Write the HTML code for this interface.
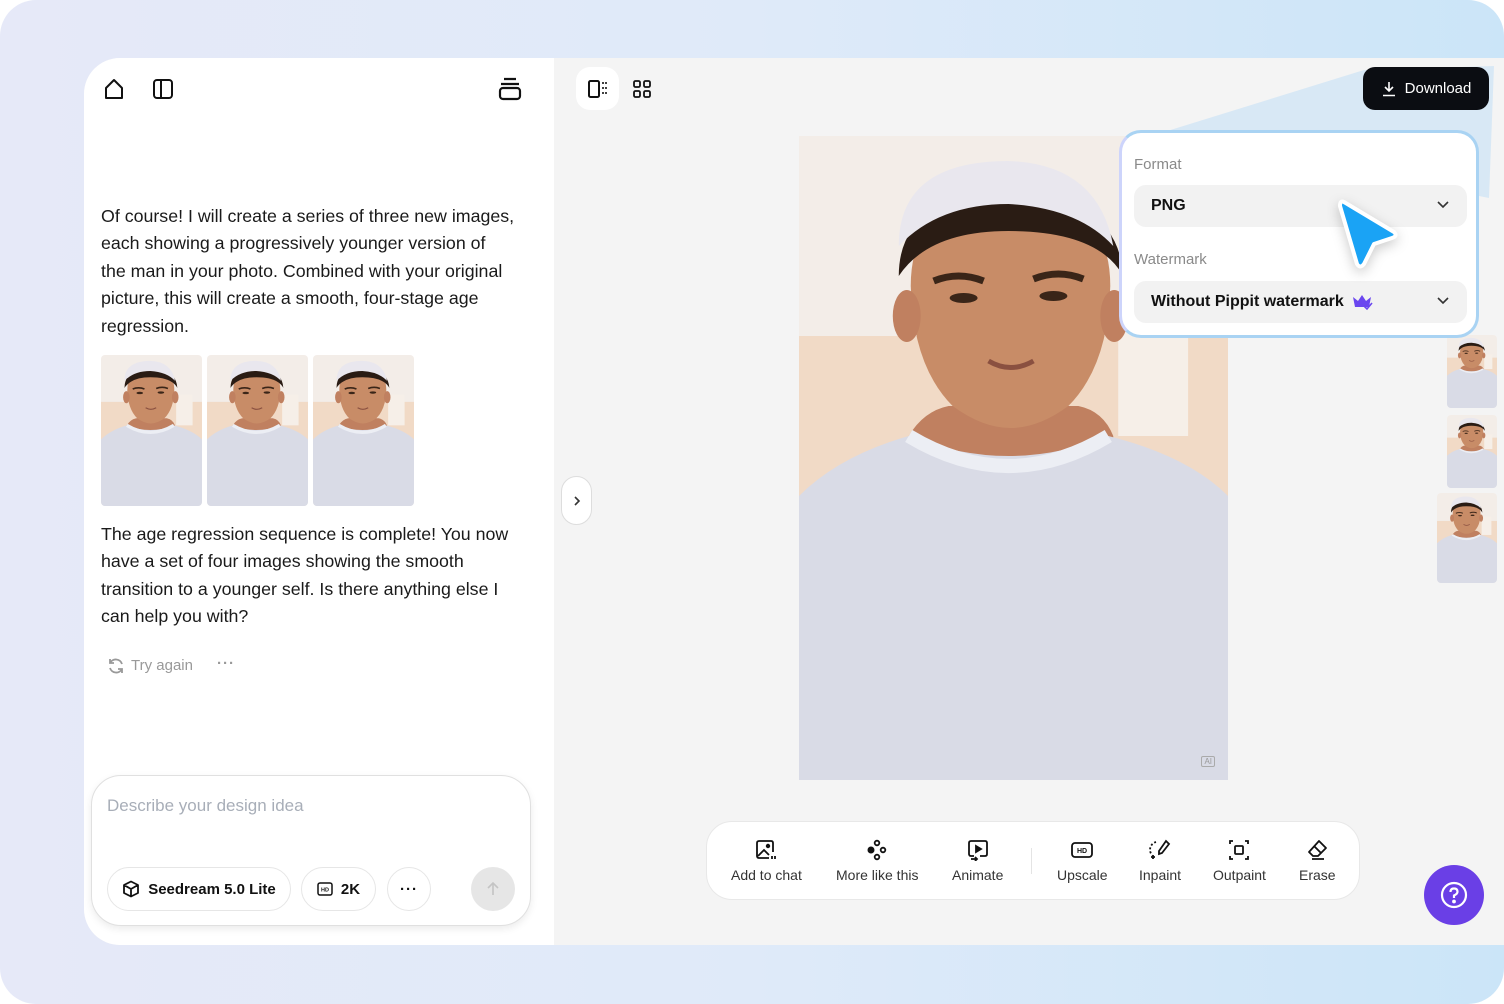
<!DOCTYPE html>
<html><head><meta charset="utf-8"><style>
*{box-sizing:border-box;margin:0;padding:0}
body{width:1504px;height:1004px;background:#fff;font-family:"Liberation Sans",sans-serif;position:relative;overflow:hidden;color:#111}
.bg{position:absolute;left:0;top:0;width:1504px;height:1004px;border-radius:36px;background:linear-gradient(90deg,#e6e9f8 0%,#dfeaf9 50%,#cbe5f8 100%)}
.app{position:absolute;left:84px;top:58px;width:1420px;height:887px;border-radius:36px 0 0 36px;overflow:hidden;background:#f4f4f4}
.left{position:absolute;left:0;top:0;width:470px;height:887px;background:#fff}
.abs{position:absolute}
p.t{position:absolute;left:17px;width:440px;font-size:17.8px;line-height:27.4px;color:#1a1a1a;white-space:nowrap}
.pill{position:absolute;height:44px;border:1px solid #e6e6e6;border-radius:22px;display:flex;align-items:center;justify-content:center;font-size:15px;font-weight:bold;gap:8px;background:#fff}
.tool{position:absolute;top:0;display:flex;flex-direction:column;align-items:center;font-size:14px;color:#333}
.tool svg{margin-top:17px;margin-bottom:6px}
.dd{position:absolute;left:12px;width:333px;height:42px;background:#f2f2f2;border-radius:12px;font-size:16px;font-weight:bold;padding-left:17px;display:flex;align-items:center}
.lbl{position:absolute;left:12px;font-size:15px;color:#8a8a8a}
.thumb{position:absolute;overflow:hidden;border-radius:4px}
</style></head><body>
<svg width="0" height="0" style="position:absolute"><defs>
<symbol id="p" viewBox="0 0 430 644" preserveAspectRatio="none">
<rect width="430" height="644" fill="#f3ede8"/>
<rect x="0" y="200" width="430" height="170" fill="#eecaa9" opacity=".55"/>
<rect x="320" y="170" width="70" height="130" fill="#f6efe8"/>
<path d="M110 300 Q125 275 150 270 L280 270 Q305 275 315 300 L315 330 L110 330Z" fill="#c08060"/>
<path d="M112 150 Q112 60 212 55 Q312 60 312 150 Q310 230 270 270 Q240 292 212 292 Q184 292 154 270 Q114 230 112 150Z" fill="#c88c67"/>
<ellipse cx="108" cy="180" rx="14" ry="26" fill="#c08060"/>
<ellipse cx="316" cy="180" rx="14" ry="26" fill="#c08060"/>
<path d="M100 140 Q100 60 210 55 Q320 60 325 140 Q300 95 210 95 Q130 95 100 140Z" fill="#2a1c14"/>
<path d="M100 110 Q100 25 210 25 Q300 28 315 110 Q280 72 210 68 Q140 68 100 110Z" fill="#e9e7ee"/>
<path d="M135 145 Q160 135 185 145" stroke="#3a2518" stroke-width="7" fill="none"/>
<path d="M235 143 Q260 133 285 143" stroke="#3a2518" stroke-width="7" fill="none"/>
<ellipse cx="165" cy="162" rx="14" ry="5" fill="#3a2518"/>
<ellipse cx="255" cy="160" rx="14" ry="5" fill="#3a2518"/>
<path d="M190 225 Q212 238 235 225" stroke="#8a5040" stroke-width="5" fill="none"/>
<path d="M0 360 Q40 320 110 300 Q210 340 310 300 Q390 320 430 360 L430 644 L0 644Z" fill="#d9dbe6"/>
<path d="M110 300 Q210 360 310 300" stroke="#eceef4" stroke-width="14" fill="none"/>
</symbol></defs></svg>
<div class="bg"></div>
<div class="app">
 <div class="left">
  <svg class="abs" style="left:18px;top:19px" width="24" height="24" viewBox="0 0 24 24" fill="none" stroke="#111" stroke-width="2" stroke-linejoin="round"><path d="M4 11 L12 3 L20 11 V21 H4Z"/></svg>
  <svg class="abs" style="left:68px;top:20px" width="22" height="22" viewBox="0 0 22 22" fill="none" stroke="#111" stroke-width="2"><rect x="2" y="2" width="18" height="18" rx="3"/><line x1="9" y1="2" x2="9" y2="20"/></svg>
  <svg class="abs" style="left:414px;top:18px" width="24" height="26" viewBox="0 0 24 26" fill="none" stroke="#111" stroke-width="2.2"><line x1="6" y1="3" x2="18" y2="3"/><line x1="3" y1="8" x2="21" y2="8"/><rect x="2" y="12" width="20" height="11" rx="3"/></svg>
  <p class="t" style="top:145px">Of course! I will create a series of three new images,<br>each showing a progressively younger version of<br>the man in your photo. Combined with your original<br>picture, this will create a smooth, four-stage age<br>regression.</p>
  <div class="thumb" style="left:17px;top:297px;width:101px;height:151px"><svg width="101" height="151"><use href="#p"/></svg></div>
  <div class="thumb" style="left:123px;top:297px;width:101px;height:151px"><svg width="101" height="151"><use href="#p"/></svg></div>
  <div class="thumb" style="left:229px;top:297px;width:101px;height:151px"><svg width="101" height="151"><use href="#p"/></svg></div>
  <p class="t" style="top:463px">The age regression sequence is complete! You now<br>have a set of four images showing the smooth<br>transition to a younger self. Is there anything else I<br>can help you with?</p>
  <svg class="abs" style="left:23px;top:599px" width="18" height="18" viewBox="0 0 18 18" fill="none" stroke="#999" stroke-width="1.8"><path d="M15 7 A6.5 6.5 0 0 0 3 6 M3 2 V6 H7 M3 11 A6.5 6.5 0 0 0 15 12 M15 16 V12 H11"/></svg>
  <div class="abs" style="left:47px;top:599px;font-size:15px;color:#999">Try again</div>
  <div class="abs" style="left:133px;top:597px;font-size:15px;color:#999;font-weight:bold;letter-spacing:1px">···</div>
  <div class="abs" style="left:7px;top:717px;width:440px;height:151px;border:1px solid #e0e0e0;border-radius:30px;background:#fff;box-shadow:0 3px 8px rgba(0,0,0,.08)">
   <div class="abs" style="left:15px;top:20px;font-size:17px;color:#a8aeb8">Describe your design idea</div>
   <div class="pill" style="left:15px;top:91px;width:184px"><svg width="18" height="18" viewBox="0 0 18 18" fill="none" stroke="#111" stroke-width="1.8" stroke-linejoin="round"><path d="M9 1.5 L16 5 V13 L9 16.5 L2 13 V5Z M2 5 L9 9 L16 5 M9 9 V16.5"/></svg>Seedream 5.0 Lite</div>
   <div class="pill" style="left:209px;top:91px;width:75px"><svg width="16" height="14" viewBox="0 0 16 14" fill="none" stroke="#111" stroke-width="1.5"><rect x="1" y="1" width="14" height="12" rx="2"/><text x="8" y="9.5" font-size="5.5" text-anchor="middle" fill="#111" stroke="none" font-weight="bold">HD</text></svg>2K</div>
   <div class="pill" style="left:295px;top:91px;width:44px;letter-spacing:1px">···</div>
   <div class="abs" style="left:379px;top:91px;width:44px;height:44px;border-radius:22px;background:#e6e6e6;display:flex;align-items:center;justify-content:center"><svg width="16" height="16" viewBox="0 0 16 16" fill="none" stroke="#c4c4c4" stroke-width="1.6"><path d="M8 14 V2 M3 7 L8 2 L13 7"/></svg></div>
  </div>
 </div>
 <div class="abs" style="left:492px;top:9px;width:43px;height:43px;border-radius:14px;background:#fff"></div>
 <svg class="abs" style="left:504px;top:21px" width="20" height="20" viewBox="0 0 20 20" fill="none" stroke="#111" stroke-width="2"><rect x="1" y="2" width="10" height="16" rx="1.5"/><path d="M15 3v2M15 8v2M15 13v2M18 3v2M18 8v2M18 13v2" stroke-width="1.6"/></svg>
 <svg class="abs" style="left:548px;top:21px" width="20" height="20" viewBox="0 0 20 20" fill="none" stroke="#111" stroke-width="1.8"><rect x="2" y="2" width="6" height="6" rx="1.5"/><rect x="12" y="2" width="6" height="6" rx="1.5"/><rect x="2" y="12" width="6" height="6" rx="1.5"/><rect x="12" y="12" width="6" height="6" rx="1.5"/></svg>
 <div class="abs" style="left:477px;top:418px;width:31px;height:49px;border:1px solid #ddd;border-radius:16px;background:#fff"><svg style="position:absolute;left:9px;top:18px" width="12" height="12" viewBox="0 0 12 12" fill="none" stroke="#333" stroke-width="1.6"><path d="M4 2 L8 6 L4 10"/></svg></div>
 <div class="abs" style="left:715px;top:78px;width:429px;height:644px"><svg width="429" height="644"><use href="#p"/></svg>
  <div class="abs" style="right:13px;bottom:13px;font-size:8px;color:#999;border:1px solid #aaa;border-radius:2px;padding:0 2px">AI</div></div>
 <div class="thumb" style="left:1363px;top:277px;width:50px;height:73px"><svg width="50" height="73"><use href="#p"/></svg></div>
 <div class="thumb" style="left:1363px;top:357px;width:50px;height:73px"><svg width="50" height="73"><use href="#p"/></svg></div>
 <div class="thumb" style="left:1353px;top:435px;width:60px;height:90px"><svg width="60" height="90"><use href="#p"/></svg></div>
 <svg class="abs" style="left:1070px;top:0" width="350" height="160"><polygon points="10,74 210,12 340,8 335,140" fill="#cfe4f5" opacity=".75"/></svg>
 <div class="abs" style="left:1279px;top:9px;width:126px;height:43px;border-radius:12px;background:#0b0d12;color:#fff;font-size:15px;display:flex;align-items:center;justify-content:center;gap:8px"><svg width="16" height="16" viewBox="0 0 16 16" fill="none" stroke="#fff" stroke-width="1.6"><path d="M8 1 V10 M4 6 L8 10 L12 6 M2 14.5 H14"/></svg>Download</div>
 <div class="abs" style="left:1035px;top:72px;width:360px;height:208px;border:3px solid #a9d3f3;border-left-color:#cdd4fb;border-radius:22px;background:#fff">
  <div class="lbl" style="top:23px">Format</div>
  <div class="dd" style="top:52px">PNG<svg style="position:absolute;right:18px;top:16px" width="12" height="8" viewBox="0 0 12 8" fill="none" stroke="#333" stroke-width="1.6"><path d="M1 1 L6 6 L11 1"/></svg></div>
  <div class="lbl" style="top:118px">Watermark</div>
  <div class="dd" style="top:148px">Without Pippit watermark<svg style="margin-left:8px" width="22" height="18" viewBox="0 0 22 18"><path d="M1 4 L6 8 L10 2 L14 8 L19 4 L17 14 H3Z" fill="#6a46ef"/><path d="M12 13 L15 16 L20 10" stroke="#6a46ef" stroke-width="1.6" fill="none"/></svg><svg style="position:absolute;right:18px;top:16px" width="12" height="8" viewBox="0 0 12 8" fill="none" stroke="#333" stroke-width="1.6"><path d="M1 1 L6 6 L11 1"/></svg></div>
 </div>
 <svg class="abs" style="left:1250px;top:136px;filter:drop-shadow(0 4px 6px rgba(0,0,0,.2))" width="70" height="80" viewBox="0 0 70 80"><path d="M10 8 L60 38 Q64 42 58 44 L40 50 L30 70 Q26 75 23 70 L6 12 Q6 6 10 8Z" fill="#1aa3f5" stroke="#fff" stroke-width="4" stroke-linejoin="round"/></svg>
 <div class="abs" style="left:622px;top:763px;width:654px;height:79px;border:1px solid #e8e8e8;border-radius:26px;background:#fff">
  <div class="tool" style="left:24px"><svg width="22" height="22" viewBox="0 0 22 22" fill="none" stroke="#111" stroke-width="1.8"><path d="M14 19 H4 Q2 19 2 17 V4 Q2 2 4 2 H16 Q18 2 18 4 V13"/><path d="M3 17 L9 11 L14 16"/><circle cx="13" cy="7" r="1.3" fill="#111"/><path d="M17 17v3M20 17v3"/></svg>Add to chat</div>
  <div class="tool" style="left:129px"><svg width="22" height="22" viewBox="0 0 22 22" fill="none" stroke="#111" stroke-width="1.8"><circle cx="11" cy="4" r="2.3"/><circle cx="5" cy="11" r="2.6" fill="#111"/><circle cx="17" cy="11" r="2.3"/><circle cx="11" cy="18" r="2.3"/></svg>More like this</div>
  <div class="tool" style="left:245px"><svg width="22" height="22" viewBox="0 0 22 22" fill="none" stroke="#111" stroke-width="1.8"><path d="M7 17 H4 Q2 17 2 15 V4 Q2 2 4 2 H18 Q20 2 20 4 V15 Q20 17 18 17 H13"/><path d="M9 7 L14 10 L9 13Z" fill="#111"/><path d="M4 20 H10 M8 18 L10 20 L8 22"/></svg>Animate</div>
  <div class="abs" style="left:324px;top:26px;width:1px;height:26px;background:#e4e4e4"></div>
  <div class="tool" style="left:350px"><svg width="22" height="22" viewBox="0 0 22 22" fill="none" stroke="#111" stroke-width="1.8"><rect x="1" y="4" width="20" height="14" rx="3"/><text x="11" y="14" font-size="7" font-weight="bold" text-anchor="middle" fill="#111" stroke="none">HD</text></svg>Upscale</div>
  <div class="tool" style="left:432px"><svg width="24" height="22" viewBox="0 0 24 22" fill="none" stroke="#111" stroke-width="1.8"><path d="M8 3 A8 8 0 0 0 4 16" stroke-dasharray="2 2"/><path d="M18 2 L21 5 L14 14 L11 15 L11 12Z"/><path d="M3 18h4M5 16v4"/></svg>Inpaint</div>
  <div class="tool" style="left:506px"><svg width="22" height="22" viewBox="0 0 22 22" fill="none" stroke="#111" stroke-width="1.8"><rect x="7" y="7" width="8" height="8" rx="1"/><path d="M2 5V2H5M17 2H20V5M2 17V20H5M17 20H20V17"/></svg>Outpaint</div>
  <div class="tool" style="left:592px"><svg width="22" height="22" viewBox="0 0 22 22" fill="none" stroke="#111" stroke-width="1.8" stroke-linejoin="round"><path d="M13 2 L20 9 L12 17 H7 L3 13Z M8 7 L15 14 M6 20 H18"/></svg>Erase</div>
 </div>
 <div class="abs" style="left:1340px;top:807px;width:60px;height:60px;border-radius:30px;background:#6a3fe6;display:flex;align-items:center;justify-content:center"><svg width="28" height="28" viewBox="0 0 28 28" fill="none" stroke="#fff" stroke-width="2.2"><circle cx="14" cy="14" r="12"/><path d="M10.5 11 Q10.5 7.5 14 7.5 Q17.5 7.5 17.5 10.8 Q17.5 13 14 14.5 V17"/><circle cx="14" cy="20.5" r=".8" fill="#fff"/></svg></div>
</div>
</body></html>
